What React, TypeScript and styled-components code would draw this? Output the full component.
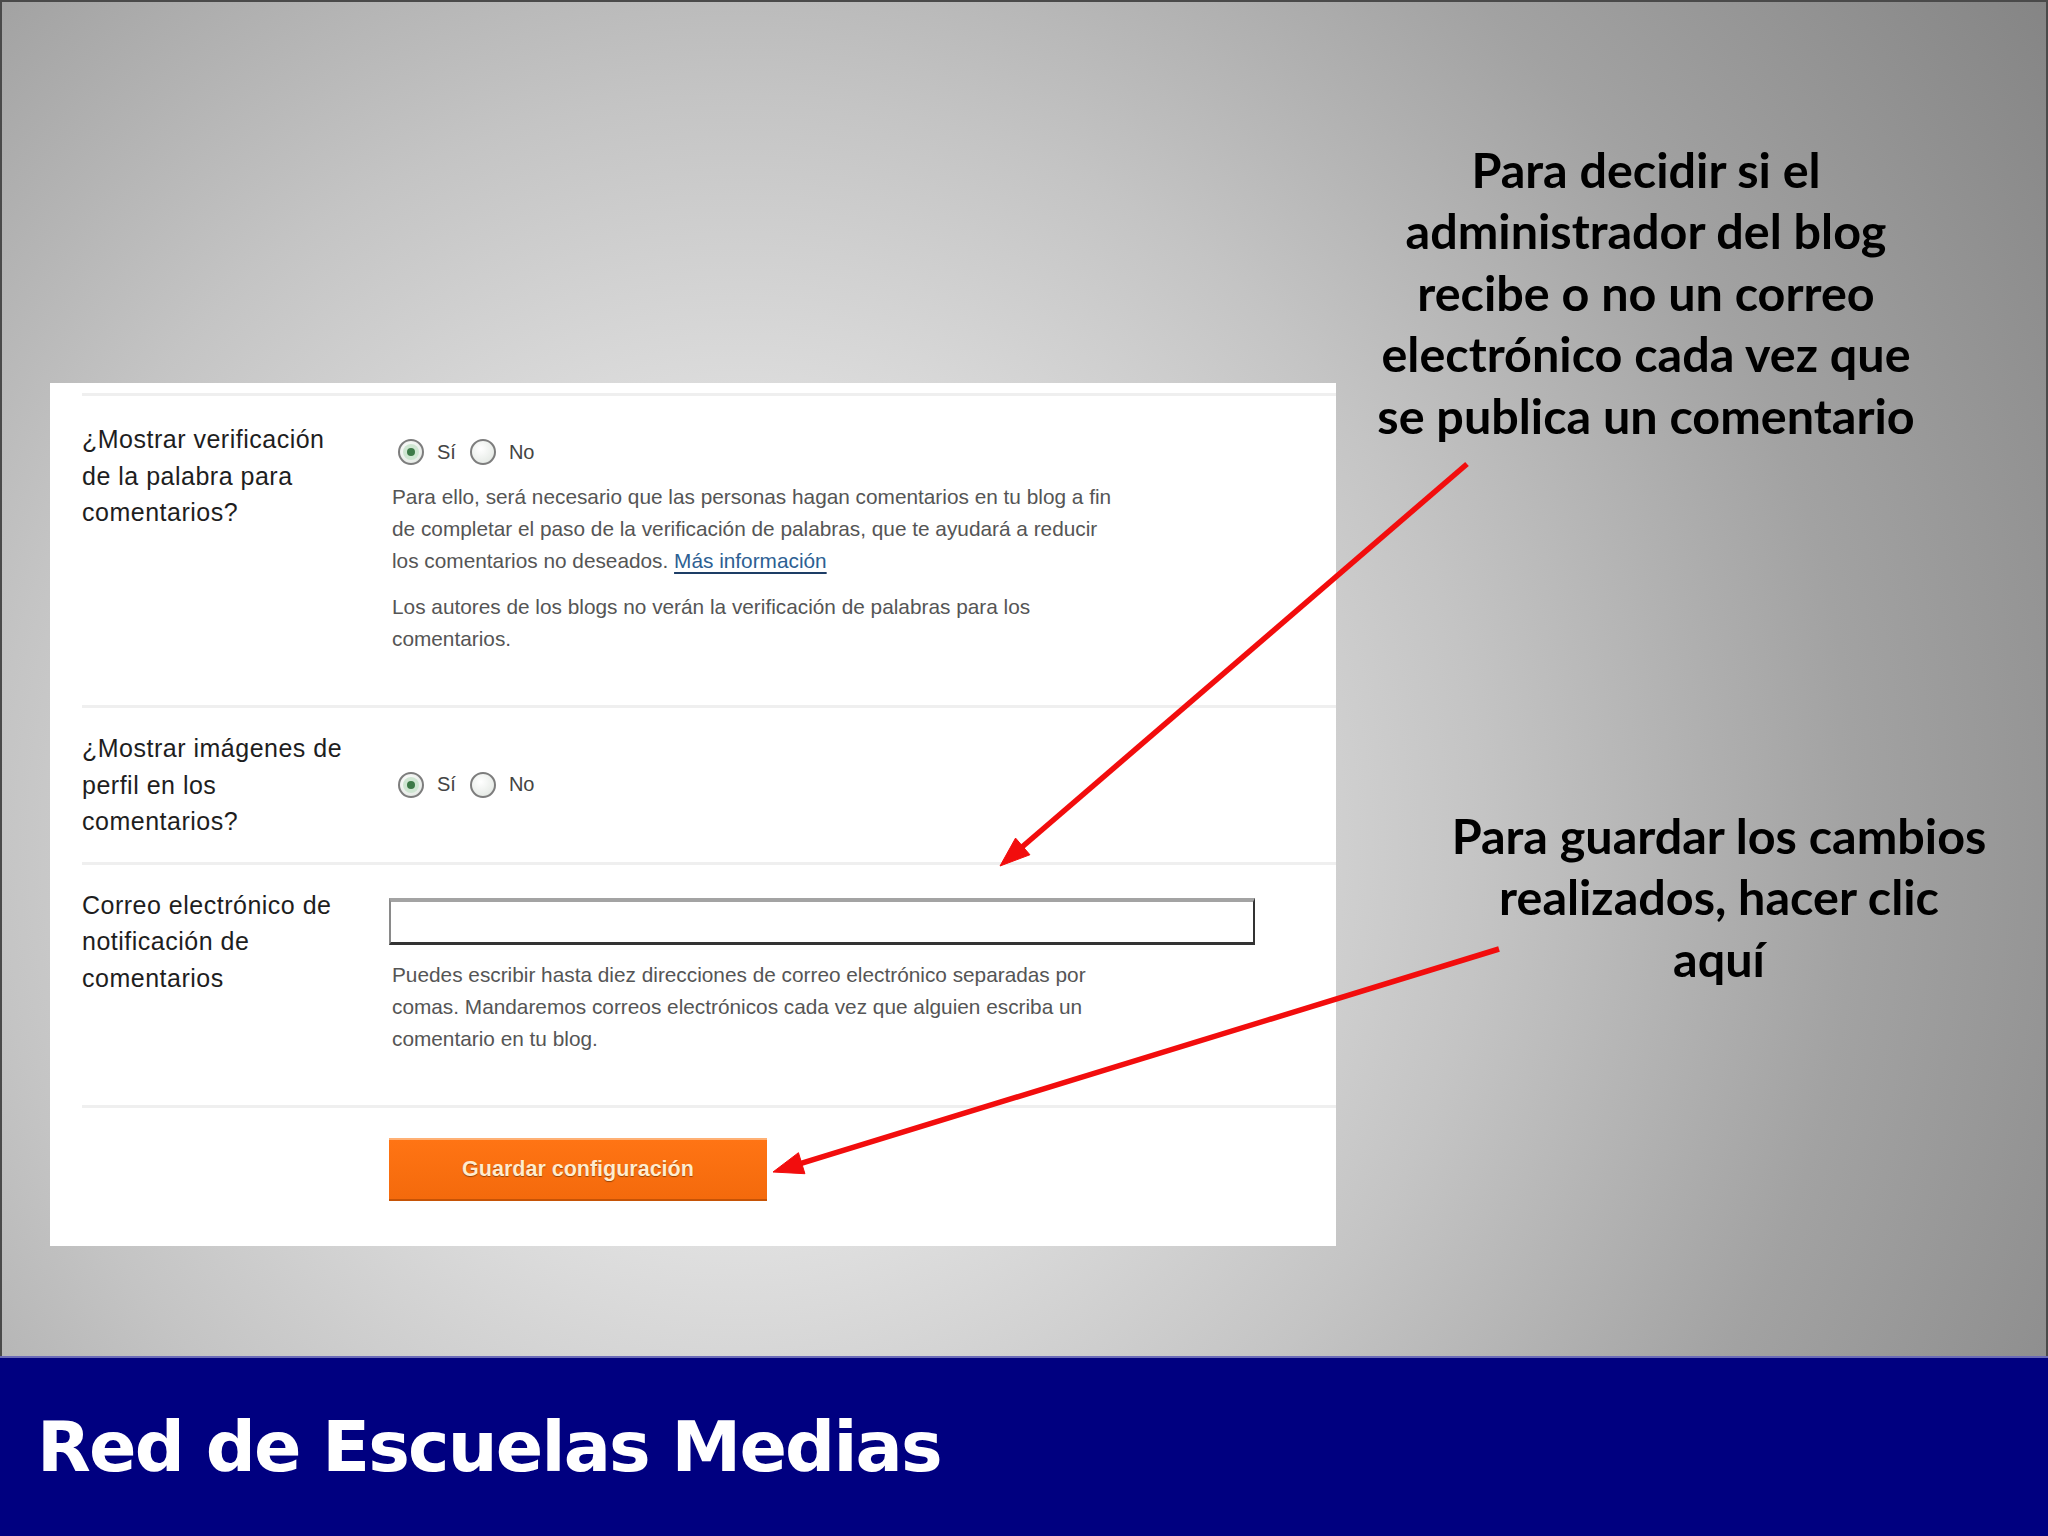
import React from "react"
import styled, { createGlobalStyle } from "styled-components"

const GlobalStyle = createGlobalStyle`
  html, body {
    margin: 0;
    padding: 0;
  }
  body {
    width: 2048px;
    height: 1536px;
    overflow: hidden;
    font-family: "Liberation Sans", Arial, sans-serif;
  }
`

const Slide = styled.div`
  width: 2048px;
  height: 1536px;
  display: flex;
  flex-direction: column;
`

const Stage = styled.main`
  position: relative;
  height: 1356px;
  box-sizing: border-box;
  display: flex;
  border: 2px solid #4a4a4a;
  border-bottom: none;
  background: radial-gradient(
    circle farthest-corner at 36% 62%,
    #f6f6f6 0%,
    #e4e4e4 22%,
    #c4c4c4 48%,
    #a2a2a2 72%,
    #858585 100%
  );
`

const Panel = styled.div`
  align-self: flex-start;
  margin: 381px 0 0 48px;
  width: 1286px;
  box-sizing: border-box;
  padding: 10px 0 0 32px;
  background: #ffffff;
  color: #222;
`

const Row = styled.section<{ $pt: number; $pb: number; $center?: boolean }>`
  display: grid;
  grid-template-columns: 307px 1fr;
  align-items: ${p => (p.$center ? "center" : "start")};
  border-top: 3px solid #efefef;
  padding: ${p => p.$pt}px 0 ${p => p.$pb}px;
`

const Label = styled.div`
  font-size: 25px;
  letter-spacing: 0.5px;
  line-height: 36.6px;
  color: #1e1e1e;
`

const Controls = styled.div`
  display: flex;
  flex-direction: column;
  align-items: flex-start;
  padding-left: 3px;
`

const RadioGroup = styled.div<{ $mt?: number }>`
  display: flex;
  align-items: center;
  height: 30px;
  margin: ${p => p.$mt ?? 0}px 0 0 6px;
  font-size: 20px;
  color: #444;
`

const Radio = styled.span<{ $checked?: boolean }>`
  width: 26px;
  height: 26px;
  box-sizing: border-box;
  border-radius: 50%;
  border: 2px solid #7d7d7d;
  background: radial-gradient(circle at 40% 35%, #ffffff 0%, #e8ece8 70%, #cfd4cf 100%);
  display: flex;
  align-items: center;
  justify-content: center;
  margin-right: 13px;
  &::after {
    content: "";
    display: ${p => (p.$checked ? "block" : "none")};
    width: 8px;
    height: 8px;
    border-radius: 50%;
    background: #3d7a48;
    box-shadow: 0 0 0 4px #cfe6d2;
  }
`

const RadioText = styled.span`
  margin-right: 14px;
`

const Help = styled.p<{ $mt: number }>`
  margin: ${p => p.$mt}px 0 0;
  font-size: 20.8px;
  line-height: 32px;
  color: #555;
  white-space: nowrap;
`

const MoreLink = styled.a`
  color: #2d5f93;
  text-decoration: underline;
  text-decoration-color: #1d3d66;
  text-underline-offset: 4px;
`

const EmailInput = styled.input`
  margin: 11px 0 0 -3px;
  width: 866px;
  height: 47px;
  box-sizing: border-box;
  border-style: solid;
  border-width: 4px 2px 3px 2px;
  border-color: #a3a3a3 #333 #333 #8a8a8a;
  background: #fff;
  outline: none;
`

const SaveButton = styled.button`
  grid-column: 2;
  width: 378px;
  height: 63px;
  border: none;
  border-top: 2px solid #ffb074;
  border-bottom: 2px solid #c65306;
  background: linear-gradient(#ff7414, #f46a0c);
  color: #ffeccf;
  font-family: "Liberation Sans", Arial, sans-serif;
  font-size: 21.5px;
  font-weight: 700;
  text-shadow: 0 1px 1px rgba(90, 40, 0, 0.6);
  cursor: pointer;
`

const Notes = styled.aside`
  flex: 1;
  display: flex;
  flex-direction: column;
  padding-top: 137px;
`

const Note = styled.p<{ $shift: number; $mt?: number }>`
  margin: ${p => p.$mt ?? 0}px 0 0;
  padding-left: ${p => Math.max(0, p.$shift * 2)}px;
  padding-right: ${p => Math.max(0, -p.$shift * 2)}px;
  text-align: center;
  font-family: Lato, "Open Sans", sans-serif;
  font-weight: 700;
  font-size: 48.5px;
  line-height: 61.4px;
  color: #000;
  white-space: nowrap;
`

const Overlay = styled.svg`
  position: absolute;
  left: -2px;
  top: -2px;
  pointer-events: none;
`

const Footer = styled.footer`
  height: 180px;
  background: #000080;
  border-top: 2px solid #6a6ab8;
  box-sizing: border-box;
  display: flex;
  align-items: center;
  padding-left: 37px;
`

const FooterTitle = styled.h1`
  margin: 0;
  font-family: "DejaVu Sans", Verdana, sans-serif;
  font-weight: 700;
  font-size: 70px;
  letter-spacing: -1.8px;
  color: #ffffff;
`

type ArrowProps = { x1: number; y1: number; x2: number; y2: number }

const Arrow = ({ x1, y1, x2, y2 }: ArrowProps) => {
  const dx = x2 - x1
  const dy = y2 - y1
  const len = Math.hypot(dx, dy)
  const ux = dx / len
  const uy = dy / len
  const headLen = 30
  const headW = 11
  const bx = x2 - ux * headLen
  const by = y2 - uy * headLen
  const pts = [
    `${x2},${y2}`,
    `${bx - uy * headW},${by + ux * headW}`,
    `${bx + uy * headW},${by - ux * headW}`,
  ].join(" ")
  return (
    <g fill="#f20d0d" stroke="#f20d0d">
      <line x1={x1} y1={y1} x2={bx + ux * 4} y2={by + uy * 4} strokeWidth={5.5} />
      <polygon points={pts} strokeWidth={1} />
    </g>
  )
}

const App = () => {
  return (
    <>
      <GlobalStyle />
      <Slide>
        <Stage>
          <Panel>
            <Row $pt={25} $pb={50}>
              <Label>
                ¿Mostrar verificación
                <br />
                de la palabra para
                <br />
                comentarios?
              </Label>
              <Controls>
                <RadioGroup $mt={16}>
                  <Radio $checked />
                  <RadioText>Sí</RadioText>
                  <Radio />
                  <RadioText>No</RadioText>
                </RadioGroup>
                <Help $mt={14}>
                  Para ello, será necesario que las personas hagan comentarios en tu blog a fin
                  <br />
                  de completar el paso de la verificación de palabras, que te ayudará a reducir
                  <br />
                  los comentarios no deseados. <MoreLink href="#">Más información</MoreLink>
                </Help>
                <Help $mt={14}>
                  Los autores de los blogs no verán la verificación de palabras para los
                  <br />
                  comentarios.
                </Help>
              </Controls>
            </Row>
            <Row $pt={22} $pb={22} $center>
              <Label>
                ¿Mostrar imágenes de
                <br />
                perfil en los
                <br />
                comentarios?
              </Label>
              <Controls>
                <RadioGroup>
                  <Radio $checked />
                  <RadioText>Sí</RadioText>
                  <Radio />
                  <RadioText>No</RadioText>
                </RadioGroup>
              </Controls>
            </Row>
            <Row $pt={22} $pb={50}>
              <Label>
                Correo electrónico de
                <br />
                notificación de
                <br />
                comentarios
              </Label>
              <Controls>
                <EmailInput type="text" />
                <Help $mt={14}>
                  Puedes escribir hasta diez direcciones de correo electrónico separadas por
                  <br />
                  comas. Mandaremos correos electrónicos cada vez que alguien escriba un
                  <br />
                  comentario en tu blog.
                </Help>
              </Controls>
            </Row>
            <Row $pt={30} $pb={45}>
              <SaveButton type="button">Guardar configuración</SaveButton>
            </Row>
          </Panel>
          <Notes>
            <Note $shift={-45}>
              Para decidir si el
              <br />
              administrador del blog
              <br />
              recibe o no un correo
              <br />
              electrónico cada vez que
              <br />
              se publica un comentario
            </Note>
            <Note $shift={28} $mt={359}>
              Para guardar los cambios
              <br />
              realizados, hacer clic
              <br />
              aquí
            </Note>
          </Notes>
          <Overlay width={2048} height={1356} viewBox="0 0 2048 1356">
            <Arrow x1={1467} y1={464} x2={1000} y2={866} />
            <Arrow x1={1499} y1={949} x2={773} y2={1172} />
          </Overlay>
        </Stage>
        <Footer>
          <FooterTitle>Red de Escuelas Medias</FooterTitle>
        </Footer>
      </Slide>
    </>
  )
}

export default App
